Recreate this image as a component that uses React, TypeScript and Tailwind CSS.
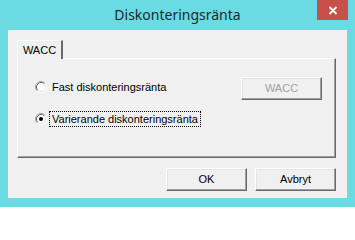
import React from "react";

const uiFont = { fontFamily: '"Liberation Sans", Arial, sans-serif' };

function Radio({ checked }: { checked?: boolean }) {
  return (
    <svg width="12" height="12" viewBox="0 0 12 12" className="shrink-0">
      <circle cx="6" cy="6" r="5" fill="#ffffff" />
      <path d="M2.11 9.89A5.5 5.5 0 0 1 9.89 2.11" stroke="#a0a0a0" fill="none" />
      <path d="M9.89 2.11A5.5 5.5 0 0 1 2.11 9.89" stroke="#ffffff" fill="none" />
      <path d="M2.82 9.18A4.5 4.5 0 0 1 9.18 2.82" stroke="#696969" fill="none" />
      <path d="M9.18 2.82A4.5 4.5 0 0 1 2.82 9.18" stroke="#e3e3e3" fill="none" />
      {checked && <circle cx="6" cy="6" r="2" fill="#000000" />}
    </svg>
  );
}

function ClassicButton({ label, disabled }: { label: string; disabled?: boolean }) {
  return (
    <button
      className={`w-[81px] h-[23px] bg-[#f0f0f0] border-t border-l border-white border-r border-b border-r-[#696969] border-b-[#696969] shadow-[inset_-1px_-1px_0_#a0a0a0,inset_1px_1px_0_#e3e3e3] text-[11px] ${
        disabled ? "text-[#a0a0a0]" : "text-black"
      }`}
      style={uiFont}
    >
      {label}
    </button>
  );
}

export default function App() {
  return (
    <div className="w-[355px] h-[207px] bg-[#6bdbe3] flex flex-col overflow-hidden">
      {/* Title bar */}
      <div className="relative h-[30px] shrink-0 flex items-center justify-center">
        <span
          className="text-[14px] text-[#1b2a2c] -mt-[1px]"
          style={{ fontFamily: '"Noto Sans", "Open Sans", sans-serif' }}
        >
          Diskonteringsränta
        </span>
        <div className="absolute top-0 right-[7px] w-[31px] h-[20px] bg-[#c8504b] flex items-center justify-center">
          <svg width="10" height="9" viewBox="0 0 10 9">
            <path d="M1.5 1L8.5 8M8.5 1L1.5 8" stroke="#ffffff" strokeWidth="1.8" />
          </svg>
        </div>
      </div>

      {/* Client area */}
      <div
        className="ml-[8px] w-[339px] h-[168px] shrink-0 bg-[#f0f0f0] flex flex-col pl-[9px] pr-[11px] pt-[10px]"
        style={uiFont}
      >
        {/* Tab strip */}
        <div className="flex h-[18px]">
          <div className="relative z-10 w-[46px] h-[19px] bg-[#f0f0f0] border-t border-l border-white border-r-2 border-r-[#696969] flex items-center justify-center text-[11px] text-black">
            WACC
          </div>
        </div>

        {/* Tab pane */}
        <div className="h-[100px] border-t border-l border-white border-r border-b border-r-[#696969] border-b-[#696969] shadow-[inset_-1px_-1px_0_#a0a0a0] pl-[17px] pr-[13px] pt-[17px]">
          <div className="flex items-center justify-between h-[24px]">
            <label className="flex items-center -mt-[3px]">
              <Radio />
              <span className="ml-[2px] px-[2px] border border-dotted border-transparent text-[11px] leading-[14px] text-black">
                Fast diskonteringsränta
              </span>
            </label>
            <ClassicButton label="WACC" disabled />
          </div>
          <label className="flex items-center mt-[11px]">
            <Radio checked />
            <span className="ml-[2px] px-[2px] border border-dotted border-black text-[11px] leading-[14px] text-black">
              Varierande diskonteringsränta
            </span>
          </label>
        </div>

        {/* Dialog buttons */}
        <div className="flex justify-end gap-[8px] mt-[10px]">
          <ClassicButton label="OK" />
          <ClassicButton label="Avbryt" />
        </div>
      </div>
    </div>
  );
}
